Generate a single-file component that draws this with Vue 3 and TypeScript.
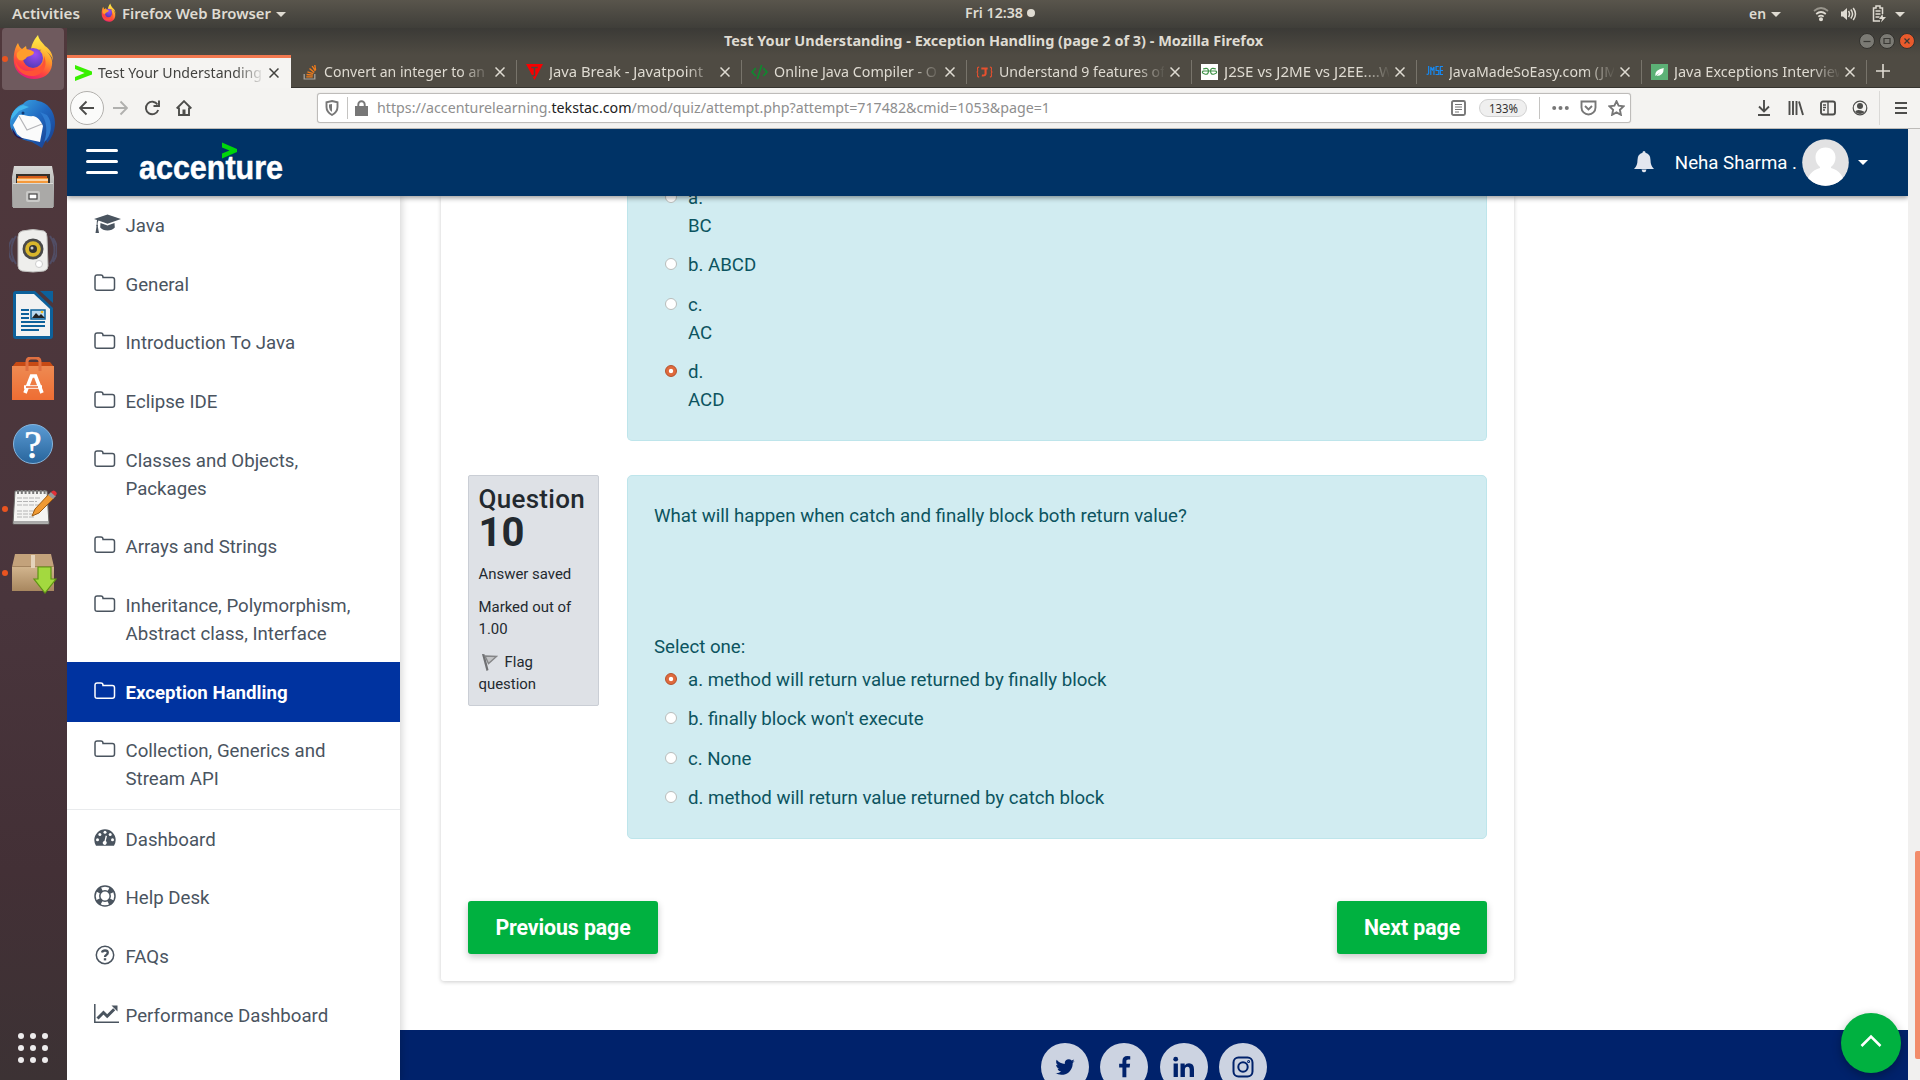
<script setup lang="ts">
import { h } from 'vue'

interface Tab { icon: string; title: string; width: number; active?: boolean }
interface NavItem { icon: string; label: string; active?: boolean }
interface Option { label: string; answer?: string; checked?: boolean }

// Single line of text set to an exact width
const FitText = (props: { text: string; w: number }) =>
  h('svg', { width: props.w, height: 20, style: 'display:block;overflow:visible;flex:none' }, [
    h('text', { x: 0, y: 15, textLength: props.w, lengthAdjust: 'spacingAndGlyphs', fill: 'currentColor' }, props.text),
  ])
FitText.props = ['text', 'w']

const tabs: Tab[] = [
  { icon: 'acc', title: 'Test Your Understanding', width: 164, active: true },
  { icon: 'so', title: 'Convert an integer to an', width: 161 },
  { icon: 'jtp', title: 'Java Break - Javatpoint', width: 154 },
  { icon: 'code', title: 'Online Java Compiler - O', width: 163 },
  { icon: 'tj', title: 'Understand 9 features of', width: 166 },
  { icon: 'gfg', title: 'J2SE vs J2ME vs J2EE....W', width: 169 },
  { icon: 'jmse', title: 'JavaMadeSoEasy.com (JM', width: 168 },
  { icon: 'leaf', title: 'Java Exceptions Interview', width: 172 },
]

const courses: NavItem[] = [
  { icon: 'cap', label: 'Java' },
  { icon: 'folder', label: 'General' },
  { icon: 'folder', label: 'Introduction To Java' },
  { icon: 'folder', label: 'Eclipse IDE' },
  { icon: 'folder', label: 'Classes and Objects, Packages' },
  { icon: 'folder', label: 'Arrays and Strings' },
  { icon: 'folder', label: 'Inheritance, Polymorphism, Abstract class, Interface' },
  { icon: 'folder', label: 'Exception Handling', active: true },
  { icon: 'folder', label: 'Collection, Generics and Stream API' },
]
const links: NavItem[] = [
  { icon: 'dash', label: 'Dashboard' },
  { icon: 'ring', label: 'Help Desk' },
  { icon: 'faq', label: 'FAQs' },
  { icon: 'chart', label: 'Performance Dashboard' },
]
const navGroups = [courses, links]

const previousOptions: Option[] = [
  { label: 'a.', answer: 'BC' },
  { label: 'b. ABCD' },
  { label: 'c.', answer: 'AC' },
  { label: 'd.', answer: 'ACD', checked: true },
]
const options: Option[] = [
  { label: 'a. method will return value returned by finally block', checked: true },
  { label: "b. finally block won't execute" },
  { label: 'c. None' },
  { label: 'd. method will return value returned by catch block' },
]

const dock = ['firefox', 'thunderbird', 'files', 'music', 'writer', 'software', 'help', 'gedit', 'package']
const running = ['firefox', 'gedit', 'package']
const rays = [0, 1, 2, 3, 4, 5, 6, 7]
</script>

<template>
  <div class="desktop">
    <svg width="0" height="0" class="defs">
      <defs>
        <linearGradient id="fxBody" x1=".8" y1="0" x2=".3" y2="1"><stop offset="0" stop-color="#ffe34a" /><stop offset=".35" stop-color="#ff9a2a" /><stop offset=".7" stop-color="#ff4440" /><stop offset="1" stop-color="#e01880" /></linearGradient>
        <linearGradient id="fxTail" x1="0" y1="0" x2="0" y2="1"><stop offset="0" stop-color="#fff04a" /><stop offset="1" stop-color="#ffa42a" /></linearGradient>
        <radialGradient id="fxCore" cx=".6" cy=".3" r=".8"><stop offset="0" stop-color="#a04cf4" /><stop offset="1" stop-color="#4a3ab0" /></radialGradient>
        <linearGradient id="tbBlue" x1="0" y1="0" x2="1" y2="1"><stop offset="0" stop-color="#3fb0ea" /><stop offset=".5" stop-color="#2068c0" /><stop offset="1" stop-color="#173a88" /></linearGradient>
        <linearGradient id="metal" x1="0" y1="0" x2="0" y2="1"><stop offset="0" stop-color="#d8d8d6" /><stop offset="1" stop-color="#8f8f8e" /></linearGradient>
        <linearGradient id="bag" x1="0" y1="0" x2="0" y2="1"><stop offset="0" stop-color="#ee8a52" /><stop offset="1" stop-color="#ee6d33" /></linearGradient>
        <linearGradient id="ask" x1="0" y1="0" x2="0" y2="1"><stop offset="0" stop-color="#5b9bd4" /><stop offset="1" stop-color="#28659c" /></linearGradient>
        <linearGradient id="box" x1="0" y1="0" x2="0" y2="1"><stop offset="0" stop-color="#d3b68f" /><stop offset="1" stop-color="#a8875f" /></linearGradient>
        <symbol id="firefox" viewBox="0 0 48 48">
          <path d="M9 9c1 3 2 5 4 6l4-3 1 5c4-1 7-1 9 1l8-3c6 5 9 10 8 16-1 9-9 14-18 14S6 39 5 29C4 21 6 13 9 9z" fill="url(#fxBody)" />
          <path d="M22 17c0-5 2-10 7-16 1 5 4 7 7 11 6 4 8 9 8 15-1-5-4-8-8-10-5-2-9-1-14 0z" fill="url(#fxTail)" />
          <circle cx="24" cy="24" r="10" fill="url(#fxCore)" />
          <path d="M8 19c4-4 9-6 17-1 0 3-4 4-7 5-2 3-5 4-8 3-2-2-3-4-2-7z" fill="#ff9d2c" />
          <path d="M6 25c3 11 12 14 20 11 6-2 9-7 9-14 5 12-3 20-12 20C13 42 6 35 6 25z" fill="#ff5236" />
        </symbol>
      </defs>
    </svg>

    <header class="panel">
      <FitText class="activities" text="Activities" :w="68" />
      <svg class="panel-ff" width="17" height="20" viewBox="0 0 48 48" preserveAspectRatio="none"><use href="#firefox" /></svg>
      <FitText class="appname" text="Firefox Web Browser" :w="149" />
      <i class="tri" />
      <div class="clock"><FitText text="Fri 12:38" :w="58" /><i class="dot" /></div>
      <div class="status">
        <FitText text="en" :w="17" /><i class="tri" />
        <svg class="wifi" width="16" height="16" viewBox="0 0 16 16" fill="none" stroke="#dfdbd2" stroke-width="1.7"><path d="M1 5q7-6 14 0" opacity=".5" /><path d="M3.2 8q4.8-4 9.6 0M5.3 10.7q2.7-2.2 5.4 0" /><circle cx="8" cy="13.3" r="1.2" fill="#dfdbd2" /></svg>
        <svg class="vol" width="17" height="16" viewBox="0 0 17 16" fill="none" stroke="#dfdbd2" stroke-width="1.5"><path d="M1 5.5h2L7 2v12l-4-3.500H1z" fill="#dfdbd2" stroke="none" /><path d="M8.500 5q2 3 0 6M10.800 3.500q3.500 4.500 0 9M13.200 2q4.500 6 0 12" /></svg>
        <svg class="batt" width="14" height="18" viewBox="0 0 14 18" fill="none" stroke="#dfdbd2" stroke-width="1.500"><path d="M8 16H1.500V3h2.500V1h4v2h2.500v6M3.500 6h5M3.500 9h5M3.500 12h4" /><path d="M10.500 9l-3.500 5h3l-1 3.500 5-5.500h-3z" fill="#dfdbd2" stroke="none" /></svg>
        <i class="tri" />
      </div>
    </header>

    <div class="workspace">
      <nav class="dock">
        <div v-for="name in dock" :key="name" class="launcher" :class="{ focused: name === 'firefox' }">
          <i v-if="running.includes(name)" class="run" />
          <svg width="48" height="48" viewBox="0 0 48 48" :class="`app-${name}`">
            <use v-if="name === 'firefox'" href="#firefox" />
            <g v-else-if="name === 'thunderbird'">
              <path d="M16 2c4-3 9-3 13-1 9 1 17 10 17 22 0 8-3 15-8 20l-1-3-4 8-10-6C11 40 1 34 1 23 1 14 7 6 14 4z" fill="url(#tbBlue)" />
              <path d="M14 5C6 8 2 13 2 20l8-9 10-4z" fill="#43b6ee" />
              <path d="M10 15c6-1 8 2 14 1 5 1 8 5 10 10L31 42 13 38 8 34 4 25z" fill="#fbfbfb" /><path d="M10 16l8 14 15-6" fill="none" stroke="#b4b4b8" stroke-width="1.200" />
              <path d="M3 28l5 8 7 3c-6 0-11-3-12-11z" fill="#21104c" />
              <path d="M31 12c7 8 8 20 4 30 8-6 9-20 3-27z" fill="#2e7bd0" />
              <circle cx="14" cy="13" r="1.500" fill="#123c78" />
            </g>
            <g v-else-if="name === 'files'">
              <path d="M5 3h38l2 11v30H3V14z" fill="url(#metal)" /><path d="M7 11h34v12H7z" fill="#35302c" />
              <path d="M9 13h29v3H9z" fill="#d35b1c" /><path d="M8 15h31v6H8z" fill="#f59a3c" /><path d="M8 17h31" stroke="#fbe9cf" stroke-width="1.500" />
              <path d="M4 20h40v25H4z" fill="#aaa9a7" /><path d="M4 20.500h40" stroke="#d9d9d7" />
              <rect x="17" y="28" width="14" height="11" rx="2" fill="#c9c9c7" /><rect x="20" y="31" width="8" height="5" fill="#fff" stroke="#444" stroke-width="1.200" />
            </g>
            <g v-else-if="name === 'music'">
              <path d="M7 8Q-2 22 7 36M4 10Q-5 22 4 34M41 8q9 14 0 28M44 10q8 12 0 24" stroke="#56648b" stroke-width="2" fill="none" opacity=".5" />
              <path d="M13 3q11-3 22 0 3 1 3 6l1 29q0 4-4 5-11 2-22 0-4-1-4-5L9 9q0-5 4-6z" fill="#eeeeec" stroke="#bcbcba" />
              <circle cx="24" cy="21" r="10.500" fill="#494949" /><circle cx="24" cy="21" r="7.800" fill="#d9b62c" /><circle cx="24" cy="21" r="4" fill="#333" /><circle cx="23" cy="20" r="1.500" fill="#ccc" />
              <circle cx="30" cy="36" r="3.500" fill="#fff" stroke="#ccc" />
            </g>
            <g v-else-if="name === 'writer'">
              <path d="M7 0h19l18 17v28q0 3-3 3H7q-3 0-3-3V3q0-3 3-3z" fill="#0d619b" /><path d="M31 0h13v12z" fill="#0d619b" /><path d="M7 3h18l16 15v27H7z" fill="#f2f2f2" />
              <path d="M12 19h8M12 23h8M12 27h8M12 31h24M12 35h24M12 39h18" stroke="#0d619b" stroke-width="2" />
              <path d="M22 19h14v9H22z" fill="#b9d9ee" stroke="#0d619b" stroke-width="1.500" /><path d="M23 27l4-5 3 3 2-2 4 4z" fill="#222" /><circle cx="33" cy="21" r="1.300" fill="#f3bc25" />
            </g>
            <g v-else-if="name === 'software'">
              <path d="M3 10l4-5h34l4 5z" fill="#c74a14" /><path d="M3 9h42v34H3z" fill="url(#bag)" />
              <path d="M18 14V5q0-4 4-4h5q4 0 4 4v9" fill="none" stroke="#e07041" stroke-width="3" />
              <path d="M16 36l6.500-17h4l6.500 17M15 30h18" fill="none" stroke="#fff" stroke-width="3.600" /><path d="M17 30h12" stroke="#e9662c" stroke-width="1.500" />
            </g>
            <g v-else-if="name === 'help'">
              <circle cx="24" cy="23" r="19.500" fill="url(#ask)" stroke="#86b5dd" />
              <text x="24" y="37" text-anchor="middle" font-family="Liberation Serif, serif" font-size="39" fill="#fff" stroke="#fff" stroke-width=".7">?</text>
            </g>
            <g v-else-if="name === 'gedit'">
              <path d="M6 8h32l2 33H4z" fill="#f4f4f2" stroke="#6a6a68" /><path d="M5 39h34" stroke="#aaa" stroke-width="2" />
              <path d="M8 15h24M8 18.500h20M8 22h24M8 28h19M8 31h15M8 34h17" stroke="#b4b4b4" stroke-width="1.200" stroke-dasharray="5 1" />
              <path v-for="r in rays" :key="r" :d="`M${9 + r * 3.8} 11v-4`" stroke="#777" stroke-width="2" />
              <path d="M23 33l3-7 14-15 5 4-15 15z" fill="#f09a33" stroke="#9b5b12" /><path d="M39 12l3-3 5 4-3 3z" fill="#999" /><path d="M42 9q3-3 5 0 2 2-1 4z" fill="#e22f37" />
            </g>
            <g v-else>
              <path d="M6 3h36l3 13H3z" fill="#c3a27b" /><path d="M3 15h42v25H3z" fill="url(#box)" /><path d="M3 15.500h42" stroke="#a4845f" />
              <path d="M22 4h4v13h-4z" fill="#e4d3bb" /><path d="M29 16h13v12h5L36 42 25 28h4z" fill="#a3d93f" stroke="#5e9413" stroke-width="1.200" />
            </g>
          </svg>
        </div>
        <div class="apps"><i v-for="n in 9" :key="n" /></div>
      </nav>

      <section class="window">
        <div class="titlebar">
          <FitText text="Test Your Understanding - Exception Handling (page 2 of 3) - Mozilla Firefox" :w="539" />
          <div class="controls">
            <svg v-for="k in 3" :key="k" width="16" height="16" viewBox="0 0 16 16">
              <circle cx="8" cy="8" r="7.500" :fill="k === 3 ? '#e95a2c' : '#7b7a74'" stroke="#33322e" />
              <path :d="k === 1 ? 'M4.500 8.500h7' : k === 2 ? 'M5 5.500h6v5H5z' : 'M5.500 5.500l5 5m0-5l-5 5'" fill="none" stroke="#3a3935" stroke-width="1.200" />
            </svg>
          </div>
        </div>

        <div class="tabs">
          <div v-for="tab in tabs" :key="tab.title" class="tab" :class="{ active: tab.active }">
            <svg class="favicon" width="17" height="16" viewBox="0 0 16 16" preserveAspectRatio="none">
              <path v-if="tab.icon === 'acc'" d="M0 0l16 6.500v3L0 16v-4l9-4-9-4z" fill="#38f000" />
              <g v-else-if="tab.icon === 'so'" fill="none"><path d="M3 10v5h10v-5" stroke="#aaa49c" stroke-width="1.200" /><path d="M5 12.800h6M5.200 10.500l6 .7M6 7.800l5.600 1.800M8 4.500l4.500 4M10.500 2l3 5M13 1l.7 5" stroke="#f27c1a" stroke-width="1.300" /></g>
              <g v-else-if="tab.icon === 'jtp'"><path d="M0 0h16L8 16z" fill="#f80000" /><path d="M5 3.500h6M8 3.500V11q-1 2-2 0" stroke="#4b4840" stroke-width="1.500" fill="none" /></g>
              <path v-else-if="tab.icon === 'code'" d="M4.500 4L1 8l3.500 4M11.500 4L15 8l-3.500 4M10 1L6 15" fill="none" stroke="#0e8a2e" stroke-width="1.500" />
              <g v-else-if="tab.icon === 'tj'" fill="none" stroke="#e8502e"><path d="M3 3q-2 0-1.500 2.500T.500 8Q2 8 1.500 10.500T3 13M13 3q2 0 1.500 2.500t1 2.500q-1.500 0-1 2.500T13 13" /><path d="M5 4.500h6M9 4.500v5.500q-.5 2-3.500 1.500" stroke-width="2" /></g>
              <g v-else-if="tab.icon === 'gfg'"><path d="M0 0h16v16H0z" fill="#fff" /><path d="M2 5q5-2 5 2t-3.500 3-1.500-3h6M14 5q-5-2-5 2t3.500 3 1.500-3H8" fill="none" stroke="#3c9045" stroke-width="1.100" /></g>
              <path v-else-if="tab.icon === 'jmse'" d="M2.500 2v7q0 2-2 1M4.500 11V3l1.500 3L7.500 3v8M12 2.500H9.500v4H12v4H9M16 2.500h-2.500v8H16M13.500 6.500H16" fill="none" stroke="#168af4" stroke-width="1.100" />
              <g v-else><path d="M0 0h16v16H0z" fill="#5cb176" /><path d="M4 12Q3 6 12 4q0 8-7 8l4-4z" fill="#fff" /></g>
            </svg>
            <div class="tab-title"><FitText :text="tab.title" :w="tab.width" /></div>
            <svg class="close" width="10" height="10" viewBox="0 0 10 10" fill="none" stroke="currentColor" stroke-width="1.500"><path d="M.5.500l9 9m0-9l-9 9" /></svg>
          </div>
          <svg class="newtab" width="14" height="14" viewBox="0 0 14 14" stroke="#dfdbd2" stroke-width="1.600"><path d="M7 0v14M0 7h14" /></svg>
        </div>

        <div class="toolbar">
          <span class="back"><svg width="16" height="16" viewBox="0 0 16 16"><path d="M15 8H1.500M7.500 1.500L1 8l6.500 6.500" /></svg></span>
          <span class="tool off"><svg width="16" height="16" viewBox="0 0 16 16"><path d="M1 8h13.500M8.500 1.500L15 8l-6.500 6.500" /></svg></span>
          <span class="tool"><svg width="16" height="16" viewBox="0 0 16 16"><path d="M13.500 4.500a6.300 6.300 0 1 0 .7 5.500M15 .500v5.500H9.500" /></svg></span>
          <span class="tool"><svg width="16" height="16" viewBox="0 0 16 16"><path d="M.7 8.500L8 1.200l7.300 7.300M3 7.500V15h10V7.500" /><path d="M6.500 9.500h3V15h-3z" fill="#4d4d4b" stroke="none" /></svg></span>
          <div class="urlbar">
            <svg class="shield" width="14" height="16" viewBox="0 0 14 16"><path d="M7 1l5.500 1.300V7q0 5-5.500 8Q1.500 12 1.500 7V2.300z" /><path d="M7 4v8Q4 10 4 7V4.500z" fill="#777" stroke="none" /></svg>
            <i class="rule" />
            <svg class="lock" width="13" height="16" viewBox="0 0 13 16"><path d="M.5 7h12v8H.5z" fill="#777" /><path d="M3.300 7V4.500a3.200 3.200 0 0 1 6.400 0V7" /></svg>
            <svg class="url" width="673" height="20"><text x="0" y="15" textLength="673" lengthAdjust="spacingAndGlyphs" fill="#8e8e8e">https://accenturelearning.<tspan fill="#222">tekstac.com</tspan>/mod/quiz/attempt.php?attempt=717482&amp;cmid=1053&amp;page=1</text></svg>
            <div class="url-actions">
              <svg width="15" height="16" viewBox="0 0 15 16"><rect x="1" y="1" width="13" height="14" rx="1.500" /><path d="M4 4.500h7M4 7h7M4 9.500h7M4 12h4" stroke-width="1.200" /></svg>
              <span class="zoom"><FitText text="133%" :w="29" /></span>
              <i class="rule" />
              <svg class="dots" width="17" height="16" viewBox="0 0 17 16"><g fill="#777" stroke="none"><circle cx="2.200" cy="8" r="2" /><circle cx="8.500" cy="8" r="2" /><circle cx="14.800" cy="8" r="2" /></g></svg>
              <svg class="pocket" width="17" height="16" viewBox="0 0 17 16"><path d="M1.500 1.500h14v6a7 7 0 0 1-14 0zM5 6l3.500 3.500L12 6" /></svg>
              <svg class="star" width="17" height="16" viewBox="0 0 17 16"><path d="M8.500 1.200l2.100 4.500 5 .6-3.700 3.500 1 5-4.400-2.500-4.400 2.500 1-5L1.400 6.300l5-.6z" /></svg>
            </div>
          </div>
          <div class="right-tools">
            <span class="tool"><svg width="14" height="16" viewBox="0 0 14 16"><path d="M7 0v11M2 6.500l5 5 5-5M1 15h12" /></svg></span>
            <span class="tool"><svg width="16" height="16" viewBox="0 0 16 16"><path d="M1.500 1v14M5 1v14M8.500 1v14M11 1.500L15 15" /></svg></span>
            <span class="tool"><svg width="16" height="16" viewBox="0 0 16 16"><rect x="1" y="1.500" width="14" height="13" rx="2" /><path d="M8 2v12M3 5h3M3 7.500h3M3 10h2" stroke-width="1.400" /></svg></span>
            <span class="tool"><svg width="16" height="16" viewBox="0 0 16 16"><circle cx="8" cy="8" r="6.800" stroke-width="1.200" /><circle cx="8" cy="6" r="3" fill="#4d4d4b" stroke="none" /><path d="M3 12q2-4 10 0-5 4-10 0z" fill="#4d4d4b" stroke="none" /></svg></span>
            <i class="rule tall" />
            <span class="tool menu"><svg width="14" height="14" viewBox="0 0 14 14"><path d="M1 2h12M1 7h12M1 12h12" /></svg></span>
          </div>
        </div>

        <div class="viewport">
          <div class="page">
            <header class="site-header">
              <div class="burger"><i /><i /><i /></div>
              <svg class="logo" width="146" height="50" viewBox="0 0 146 50"><text x="0" y="42" textLength="144" lengthAdjust="spacingAndGlyphs" fill="#fff" stroke="#fff" stroke-width=".5">accenture</text><path d="M83 5.500l15 6.500v3l-15 6.500v-5l7.500-3-7.500-3z" fill="#00d60b" /></svg>
              <div class="user">
                <svg width="20" height="22" viewBox="0 0 20 22"><path d="M10 0q1.500 0 1.500 1.800 5 1.200 5 7.200 0 6 3.500 9H0q3.500-3 3.500-9 0-6 5-7.200Q8.500 0 10 0zM7.500 18.500h5q-.5 2.800-2.500 2.800t-2.500-2.800z" fill="#e2e6ee" /></svg>
                <span class="name">Neha Sharma .</span>
                <svg class="avatar" width="47" height="47" viewBox="0 0 47 47"><clipPath id="av"><circle cx="23.500" cy="23.500" r="23.300" /></clipPath><g clip-path="url(#av)"><path d="M0 0h47v47H0z" fill="#e2e2e3" /><path d="M23.500 8.500c6.500 0 10 4.500 10 10 0 4-1.500 7-4.500 9.500v1c8 2 13 8 14 18H4c1-10 6-16 14-18v-1c-3-2.500-4.500-5.500-4.500-9.500 0-5.500 3.500-10 10-10z" fill="#fff" /></g></svg>
                <i class="caret" />
              </div>
            </header>

            <div class="site-body">
              <aside class="sidebar">
                <div v-for="(group, g) in navGroups" :key="g" class="group">
                  <div v-for="item in group" :key="item.label" class="item" :class="{ active: item.active }">
                    <span class="ico">
                      <svg v-if="item.icon === 'cap'" width="28" height="20" viewBox="0 0 28 20"><path d="M13.500.500L27 5l-13.500 4.700L4.500 6.500Q3.500 8 3.500 10.500q1 1 .3 2L5 19H1.500l1-6.500q-.8-1 .2-2Q2.700 7.500 3 6L0 5zM6.500 9l7 2.500 7-2.500.3 4.500q-2.500 3-7.300 3t-7.300-3z" fill="currentColor" /></svg>
                      <svg v-else-if="item.icon === 'folder'" width="22" height="18" viewBox="0 0 22 18"><path d="M1 14V3.200Q1 1 3.200 1h3.600Q9 1 9 3.200v.3h9.300q2.200 0 2.200 2.200V14q0 2.300-2.200 2.300H3.200Q1 16.300 1 14z" fill="none" stroke="currentColor" stroke-width="1.500" /></svg>
                      <svg v-else-if="item.icon === 'dash'" width="22" height="18" viewBox="0 0 22 18"><path d="M2 16.800Q.300 14 .3 11a10.700 10.700 0 0 1 21.400 0q0 3-1.700 5.800z" fill="currentColor" /><g fill="#fff"><circle cx="3.500" cy="10.800" r="1.500" /><circle cx="5.900" cy="5.600" r="1.500" /><circle cx="11" cy="3.300" r="1.500" /><circle cx="16.200" cy="5.600" r="1.500" /><circle cx="18.500" cy="10.800" r="1.500" /><path d="M11.700 6.500l1.300.4-1.200 5q1.300 1 .9 2.400-.7 2-2.500 1.500-1.700-.5-1.500-2.200.3-1.500 1.800-1.900z" /></g></svg>
                      <svg v-else-if="item.icon === 'ring'" width="22" height="22" viewBox="0 0 22 22" fill="none" stroke="currentColor"><circle cx="11" cy="11" r="7.700" stroke-width="5.500" stroke-dasharray="5 7.095" stroke-dashoffset="-3.550" /><circle cx="11" cy="11" r="10" stroke-width="1.500" /><circle cx="11" cy="11" r="5.200" stroke-width="1.500" /></svg>
                      <svg v-else-if="item.icon === 'faq'" width="22" height="20" viewBox="0 0 22 20"><circle cx="11" cy="10" r="8.700" fill="none" stroke="currentColor" stroke-width="1.500" /><path d="M8 7.500Q8.600 5.500 11 5.500q2.800 0 2.800 2.300 0 1.300-1.500 2.100Q11 10.600 11 12" fill="none" stroke="currentColor" stroke-width="2.300" /><path d="M9.800 13.200h2.400v2.200H9.800z" fill="currentColor" /></svg>
                      <svg v-else width="25" height="20" viewBox="0 0 25 20"><path d="M.8 0v18.300H25" fill="none" stroke="currentColor" stroke-width="1.500" /><path d="M3.500 14.500l6-6 3.700 3.700 7-7" fill="none" stroke="currentColor" stroke-width="3" /><path d="M17.500 1.500h6v6z" fill="currentColor" /></svg>
                    </span>
                    <span class="label">{{ item.label }}</span>
                  </div>
                </div>
              </aside>

              <main class="main">
                <div class="content">
                  <article class="card">
                    <div class="formulation first">
                      <div class="option" v-for="o in previousOptions" :key="o.label">
                        <i class="radio" :class="{ checked: o.checked }" />
                        <div>{{ o.label }}<div v-if="o.answer">{{ o.answer }}</div></div>
                      </div>
                    </div>
                    <div class="question">
                      <div class="info">
                        <h3>Question</h3>
                        <div class="num">10</div>
                        <p>Answer saved</p>
                        <p>Marked out of 1.00</p>
                        <p><svg class="flag" width="17" height="17" viewBox="0 0 17 17"><path d="M1 0l2.500.3L7.500 16l-2 1z" fill="#6f7073" /><path d="M4 2l11.500.5-8 7z" fill="#c3c4c6" stroke="#858688" stroke-width="1.400" /></svg>Flag question</p>
                      </div>
                      <div class="formulation second">
                        <div class="qtext">What will happen when catch and finally block both return value?</div>
                        <div class="prompt">Select one:</div>
                        <div class="options">
                          <div class="option" v-for="o in options" :key="o.label">
                            <i class="radio" :class="{ checked: o.checked }" />
                            <div>{{ o.label }}</div>
                          </div>
                        </div>
                      </div>
                    </div>
                    <div class="buttons"><button class="prev">Previous page</button><button class="next">Next page</button></div>
                  </article>
                </div>
                <footer class="footer">
                  <span class="social"><svg width="22" height="22" viewBox="0 0 1792 1792"><path d="M1684 408q-67 98-162 167 1 14 1 42 0 130-38 259.500t-115.500 248.500-184.500 210.500-258 146-323 54.500q-271 0-496-145 35 4 78 4 225 0 401-138-105-2-188-64.500t-114-159.500q33 5 61 5 43 0 85-11-112-23-185.500-111.500t-73.500-205.500v-4q68 38 146 41-66-44-105-115t-39-154q0-88 44-163 121 149 294.500 238.500t371.500 99.500q-8-38-8-74 0-134 94.500-228.500t228.500-94.500q140 0 236 102 109-21 205-78-37 115-142 178 93-10 186-50z" fill="#00226b" /></svg></span>
                  <span class="social"><svg width="23" height="23" viewBox="0 0 1792 1792"><path d="M1343 12v264h-157q-86 0-116 36t-30 108v189h293l-39 296h-254v759h-306v-759h-255v-296h255v-218q0-186 104-288.500t277-102.500q147 0 228 12z" fill="#00226b" /></svg></span>
                  <span class="social"><svg width="22" height="22" viewBox="0 0 22 22" fill="#00226b"><circle cx="2.700" cy="3.200" r="2.400" /><path d="M.6 7.500h4.300V21H.6zM7.500 7.500h4.200v2q1.500-2.300 4.300-2.300 5 0 5 6V21h-4.300v-7.200q0-3-2.200-3-2.600 0-2.600 3.200v7H7.500z" /></svg></span>
                  <span class="social"><svg width="22" height="22" viewBox="0 0 22 22" fill="none" stroke="#00226b" stroke-width="2"><rect x="1.500" y="1.500" width="19" height="19" rx="5" /><circle cx="11" cy="11" r="4.700" /><circle cx="16.600" cy="5.400" r=".5" /></svg></span>
                </footer>
              </main>
            </div>
            <div class="to-top"><svg width="22" height="14" viewBox="0 0 22 14"><path d="M1.500 12L11 2.500l9.500 9.500" fill="none" stroke="#fff" stroke-width="2.500" /></svg></div>
          </div>
          <div class="scrollbar"><i /></div>
        </div>
      </section>
    </div>
  </div>
</template>

<style>
body { margin: 0; overflow: hidden; }
</style>

<style scoped>
* { box-sizing: border-box; }
.desktop { width: 1920px; height: 1080px; display: flex; flex-direction: column; overflow: hidden; font-family: "Noto Sans", "Open Sans", sans-serif; font-size: 14.500px; }
.defs { position: absolute; }
.panel { height: 28px; flex: none; position: relative; display: flex; align-items: center; padding-left: 12px; background: linear-gradient(#59554c, #3f3e39); color: #dfdbd2; font-weight: 600; }
.panel-ff { margin-left: 20px; margin-bottom: 2px; }
.appname { margin-left: 5px; }
.tri { display: block; border: 5px solid transparent; border-top: 5px solid #dfdbd2; border-bottom: 0; margin-left: 5px; }
.clock { position: absolute; left: 965px; top: 3px; display: flex; align-items: center; gap: 4px; }
.dot { width: 8px; height: 8px; border-radius: 50%; background: #dfdbd2; }
.status { margin-left: auto; display: flex; align-items: center; padding-right: 15px; }
.wifi { margin-left: 32px; }
.vol { margin-left: 11px; }
.batt { margin-left: 15px; margin-right: 4px; }

.workspace { flex: 1; display: flex; min-height: 0; }
.dock { width: 67px; flex: none; display: flex; flex-direction: column; background: linear-gradient(#50383c, #49353c 55%, #433036 80%, #3c3234); }
.launcher { position: relative; height: 64.200px; flex: none; display: flex; align-items: center; justify-content: center; margin-right: 1px; }
.focused { background: #6f5a5e; border-radius: 4px; margin: 0 3px 2px 2px; height: 62px; }
.run { position: absolute; left: 2px; top: 50%; width: 6px; height: 6px; margin-top: -3px; border-radius: 50%; background: #e95420; }
.focused .run { left: 0; }
.app-firefox, .app-files, .app-writer { margin-bottom: 3px; }
.app-gedit { margin-bottom: 5px; }
.app-package { margin-top: 3px; }
.apps { margin: auto auto 17px 18px; display: grid; grid-template-columns: repeat(3, 6px); gap: 6px; }
.apps i { height: 6px; border-radius: 50%; background: #eeeced; }

.window { flex: 1; min-width: 0; display: flex; flex-direction: column; }
.titlebar { height: 27px; flex: none; position: relative; display: flex; align-items: center; padding: 0 0 2px 657px; background: linear-gradient(#3b3a36, #4f4b43); color: #dfdbd2; font-weight: 700; }
.controls { position: absolute; right: 5px; top: 5px; display: flex; gap: 4px; }
.tabs { height: 33px; flex: none; display: flex; background: #4f4b43; border-bottom: 1px solid #36342f; color: #dfdbd2; }
.tab { width: 225px; flex: none; display: flex; align-items: center; padding: 2px 0 0 8.500px; position: relative; }
.tab:not(.active)::after { content: ""; position: absolute; right: 0; top: 5px; height: 24px; width: 1px; background: #78746b; }
.tab.active { background: #f5f4f2; border-top: 3px solid #f37950; margin-bottom: -1px; color: #42423f; width: 224px; padding: 0 0 1px 8px; margin-right: 1px; }
.favicon { flex: none; }
.tab-title { margin-left: 6px; width: 165px; height: 20px; overflow: hidden; -webkit-mask-image: linear-gradient(90deg, #000 137px, transparent 167px); mask-image: linear-gradient(90deg, #000 137px, transparent 167px); }
.close { margin-left: 6px; }
.newtab { margin: 9px 0 0 9px; }

.toolbar { height: 41px; flex: none; display: flex; align-items: center; padding-left: 3px; background: #f4f3f1; border-bottom: 1px solid #bdbbb8; }
.toolbar svg { display: block; fill: none; stroke: #4d4d4b; stroke-width: 1.900; }
.toolbar svg :deep(text), .toolbar text { stroke: none; }
.back { width: 34px; height: 34px; border: 1px solid #b2b0ad; border-radius: 50%; background: #fbfbfa; display: flex; align-items: center; justify-content: center; }
.tool { width: 32px; display: flex; justify-content: center; }
.off { opacity: .4; }
.urlbar { margin-left: 117px; width: 1314px; height: 30px; border: 1px solid #bebcba; border-radius: 3px; background: #fff; display: flex; align-items: center; box-shadow: 0 0 1px #bbb; }
.urlbar svg { stroke: #777; }
.shield { margin-left: 7px; }
.rule { width: 1px; height: 22px; background: #c5c4c2; margin-left: 8px; }
.lock { margin-left: 7px; }
.url { margin-left: 9px; overflow: visible; }
.url-actions { margin-left: auto; display: flex; align-items: center; padding-right: 5px; }
.zoom { margin-left: 13px; width: 48px; height: 18px; border: 1px solid #d1d1d1; border-radius: 9px; background: #efefef; display: flex; align-items: center; justify-content: center; font-size: 12px; color: #333; }
.url-actions .rule { margin-left: 12px; }
.dots { margin-left: 12px; }
.pocket, .star { margin-left: 11px; }
.right-tools { margin-left: auto; display: flex; align-items: center; padding-right: 3px; }
.rule.tall { height: 34px; margin-left: 3px; background: #dad9d7; }
.menu { margin-left: 5px; }

.viewport { flex: 1; min-height: 0; display: flex; background: #fff; }
.page { width: 1841px; flex: none; position: relative; display: flex; flex-direction: column; font-family: Roboto, sans-serif; font-size: 18.670px; line-height: 28px; overflow: hidden; }
.scrollbar { flex: 1; background: #f1f0ef; display: flex; justify-content: flex-end; align-items: flex-start; }
.scrollbar i { width: 5px; height: 208px; margin-top: 722px; background: #f28c6b; border-radius: 2px 0 0 2px; }
.site-header { height: 67px; flex: none; position: relative; z-index: 3; background: #036; display: flex; align-items: center; padding-left: 19px; color: #fff; box-shadow: 0 2px 5px rgba(0, 0, 0, .4); }
.burger { width: 32px; display: flex; flex-direction: column; gap: 8px; margin-bottom: 2px; }
.burger i { height: 3px; border-radius: 2px; background: #fff; }
.logo { margin-left: 21px; margin-bottom: 1px; font: 700 33px "Liberation Sans", sans-serif; }
.user { margin-left: auto; display: flex; align-items: center; padding: 1px 40px 0 0; }
.user > svg:first-child { margin-bottom: 2px; }
.name { margin-left: 21px; white-space: nowrap; }
.avatar { margin-left: 5px; margin-bottom: 1px; }
.caret { margin: -2px 0 0 9px; border: 5px solid transparent; border-top-color: #fff; border-bottom: 0; }

.site-body { flex: 1; min-height: 0; display: flex; }
.sidebar { width: 333px; flex: none; position: relative; z-index: 2; background: #fff; color: #4a545f; box-shadow: 2px 0 7px rgba(0, 0, 0, .16); }
.group + .group { border-top: 1px solid #e9ebed; margin-top: 1px; }
.item { display: flex; padding: 15.900px 40px 14.770px 26.500px; }
.item.active { background: #0033a0; color: #fff; font-weight: 700; padding-top: 16.600px; padding-bottom: 15.770px; margin-top: -.7px; margin-bottom: -1px; }
.ico { width: 32px; flex: none; height: 28px; display: flex; align-items: center; margin-top: -2px; }
.ico svg { flex: none; }

.main { flex: 1; display: flex; flex-direction: column; min-width: 0; }
.content { height: 834px; flex: none; padding-left: 41px; }
.card { width: 1073px; height: 785px; padding: 0 27px; border-radius: 0 0 3px 3px; box-shadow: 0 1px 4px rgba(0, 0, 0, .2); display: flex; flex-direction: column; }
.formulation { width: 860px; background: #d1ecf1; border: 1px solid #bee5eb; border-radius: 5px; color: #0c5460; padding: 26px; }
.first { height: 245px; margin-left: 159px; border-top: 0; border-radius: 0 0 5px 5px; padding-top: 0; display: flex; flex-direction: column; justify-content: flex-end; gap: 11.300px; overflow: hidden; flex: none; }
.question { display: flex; gap: 28px; margin-top: 34px; align-items: flex-start; }
.second { height: 364px; display: flex; flex-direction: column; }
.prompt { margin-top: 103px; }
.options { display: flex; flex-direction: column; gap: 11.300px; margin-top: 5px; }
.option { display: flex; padding-left: 11px; gap: 11px; }
.radio { flex: none; width: 12px; height: 12px; margin: 7px 0 0; border-radius: 50%; background: #fff; border: 1px solid #b9bdbb; }
.radio.checked { background: radial-gradient(circle, #fff 0 1.800px, #df6a3d 2.600px); border-color: #b5502a; }
.info { width: 131px; height: 231px; flex: none; border: 1px solid #caced5; border-radius: 2px; background: #dee1e6; padding: 10.500px 0 0 9.500px; color: #23292f; font-size: 14.930px; line-height: 22.200px; }
.info h3 { margin: 0; font-size: 24.500px; line-height: 24px; font-weight: 500; letter-spacing: 1.200px; }
.info h3 { font-size: 26px; letter-spacing: .28px; }
.num { font-size: 40px; line-height: 40px; font-weight: 700; margin-top: 2px; }
.info p { margin: 10.700px 20px 0 0; }
.flag { vertical-align: -4px; margin: 0 7px 0 2px; }
.buttons { display: flex; justify-content: space-between; margin-top: 62px; }
.buttons button { height: 53px; border: 0; padding: 0; border-radius: 3px; background: #00b140; color: #fff; font: 700 21.330px Roboto, sans-serif; letter-spacing: -.1px; box-shadow: 0 3px 7px rgba(0, 0, 0, .22); }
.prev { width: 190px; }
.next { width: 150px; }
.footer { flex: 1; background: #00226b; display: flex; padding: 13px 0 0 641px; gap: 11.300px; overflow: hidden; }
.social { width: 48px; height: 48px; flex: none; border-radius: 50%; background: #ccd3e1; display: flex; align-items: center; justify-content: center; }
.to-top { position: absolute; z-index: 4; left: 1774px; top: 884px; width: 60px; height: 60px; border-radius: 50%; background: #00b140; display: flex; align-items: center; justify-content: center; padding-bottom: 4px; box-shadow: 0 3px 10px rgba(0, 0, 0, .3); }
</style>
